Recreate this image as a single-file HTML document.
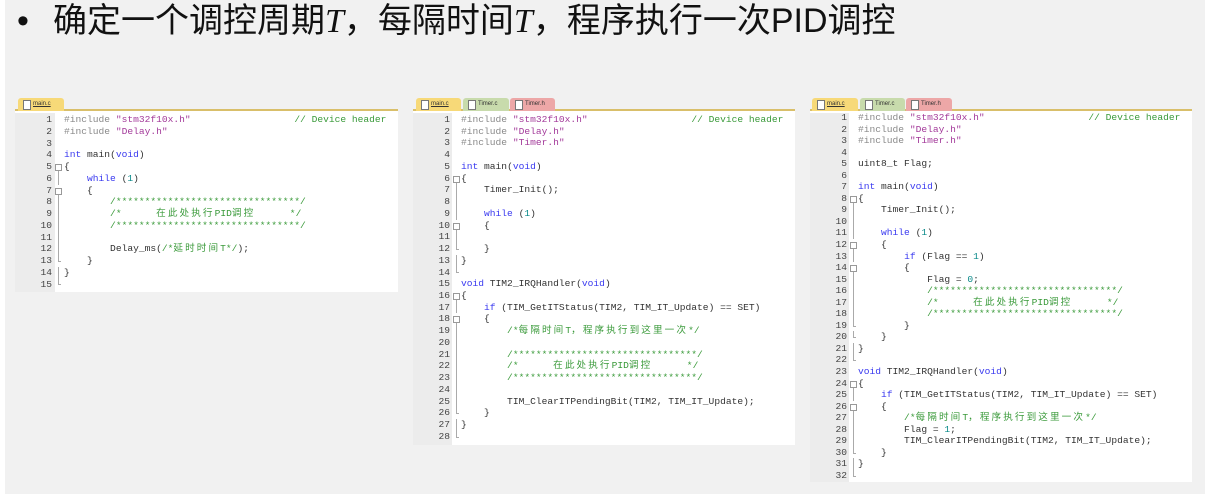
<!DOCTYPE html>
<html><head><meta charset="utf-8"><style>
*{margin:0;padding:0;box-sizing:border-box}
html,body{width:1205px;height:494px;overflow:hidden}
body{background:#f1f1f1;position:relative;font-family:"Liberation Sans","Noto Sans CJK SC",sans-serif}
.lw{position:absolute;left:0;top:0;width:5px;height:494px;background:#fff}
.title{position:absolute;left:17px;top:1px;font-size:34px;color:#111;white-space:nowrap;line-height:40px}
.title .bul{display:inline-block;width:36px}
.title i{font-family:"Liberation Serif",serif}
.pn{position:absolute;background:#fff;overflow:hidden}
.tabs{height:14px;background:#f1f1f1;border-bottom:2px solid #d9bf6a;position:relative}
.tab{position:absolute;top:1px;height:13px;font-size:6px;line-height:13px;padding-left:15px;color:#333;border-radius:3px 3px 0 0}
.tab:before{content:"";position:absolute;left:5px;top:2px;width:6px;height:8px;border:1px solid #777;background:#fff}
.y{background:#f7d978}.y span{text-decoration:underline}
.g{background:#c8dbac}.r{background:#eda7a7}
.gut{position:absolute;left:0;bottom:0;background:#ececec}
.code{position:absolute;left:0;font-family:"Liberation Mono","Noto Sans CJK SC",monospace;font-size:9.6px;color:#333}
.ln{display:flex;height:var(--lh);line-height:var(--lh);white-space:pre}
.nm{width:var(--nw);text-align:right;color:#444}
.fd{width:var(--fw);position:relative}
.fd.v:after,.fd.b:after,.fd.e:after{content:"";position:absolute;left:6px;top:0;bottom:0;border-left:1px solid #aaa}
.fd.b:before{content:"";position:absolute;left:3px;top:3px;width:5px;height:5px;border:1px solid #999;background:#fff;z-index:1}
.fd.b:after{top:8px}
.fd.e:after{bottom:50%}
.fd.e span{position:absolute;left:6px;top:50%;width:3px;border-top:1px solid #aaa}
.p{color:#8a8a8a}.s{color:#a33a9a}.c{color:#3a9a3a}.k{color:#3a3af0}.n{color:#0a8a8a}
.z{letter-spacing:2.1px}
</style></head><body>
<div class="lw"></div>
<div class="title"><span class="bul">•</span>确定一个调控周期<i>T</i>，每隔时间<i>T</i>，程序执行一次PID调控</div>

<!-- Panel 1 -->
<div class="pn" style="left:15px;top:97px;width:383px;height:195px">
<div class="tabs"><div class="tab y" style="left:3px;width:46px"><span>main.c</span></div></div>
<div class="gut" style="top:16px;width:40px"></div>
<div class="code" style="top:17px;--lh:11.75px;--nw:37px;--fw:12px">
<div class="ln"><span class="nm">1</span><span class="fd"></span><span><span class="p">#include </span><span class="s">"stm32f10x.h"</span>                  <span class="c">// Device header</span></span></div>
<div class="ln"><span class="nm">2</span><span class="fd"></span><span><span class="p">#include </span><span class="s">"Delay.h"</span></span></div>
<div class="ln"><span class="nm">3</span><span class="fd"></span><span></span></div>
<div class="ln"><span class="nm">4</span><span class="fd"></span><span><span class="k">int</span> main(<span class="k">void</span>)</span></div>
<div class="ln"><span class="nm">5</span><span class="fd b"></span><span>{</span></div>
<div class="ln"><span class="nm">6</span><span class="fd v"></span><span>    <span class="k">while</span> (<span class="n">1</span>)</span></div>
<div class="ln"><span class="nm">7</span><span class="fd b"></span><span>    {</span></div>
<div class="ln"><span class="nm">8</span><span class="fd v"></span><span class="c">        /********************************/</span></div>
<div class="ln"><span class="nm">9</span><span class="fd v"></span><span class="c">        /*      <span class="z">在此处执行</span>PID<span class="z">调控</span>      */</span></div>
<div class="ln"><span class="nm">10</span><span class="fd v"></span><span class="c">        /********************************/</span></div>
<div class="ln"><span class="nm">11</span><span class="fd v"></span><span></span></div>
<div class="ln"><span class="nm">12</span><span class="fd v"></span><span>        Delay_ms(<span class="c">/*<span class="z">延时时间</span>T*/</span>);</span></div>
<div class="ln"><span class="nm">13</span><span class="fd e"><span></span></span><span>    }</span></div>
<div class="ln"><span class="nm">14</span><span class="fd v"></span><span>}</span></div>
<div class="ln"><span class="nm">15</span><span class="fd e"><span></span></span><span></span></div>
</div>
</div>

<!-- Panel 2 -->
<div class="pn" style="left:413px;top:97px;width:382px;height:348px">
<div class="tabs"><div class="tab y" style="left:3px;width:45px"><span>main.c</span></div><div class="tab g" style="left:50px;width:46px">Timer.c</div><div class="tab r" style="left:97px;width:45px">Timer.h</div></div>
<div class="gut" style="top:16px;width:39px"></div>
<div class="code" style="top:17px;--lh:11.74px;--nw:37px;--fw:11px">
<div class="ln"><span class="nm">1</span><span class="fd"></span><span><span class="p">#include </span><span class="s">"stm32f10x.h"</span>                  <span class="c">// Device header</span></span></div>
<div class="ln"><span class="nm">2</span><span class="fd"></span><span><span class="p">#include </span><span class="s">"Delay.h"</span></span></div>
<div class="ln"><span class="nm">3</span><span class="fd"></span><span><span class="p">#include </span><span class="s">"Timer.h"</span></span></div>
<div class="ln"><span class="nm">4</span><span class="fd"></span><span></span></div>
<div class="ln"><span class="nm">5</span><span class="fd"></span><span><span class="k">int</span> main(<span class="k">void</span>)</span></div>
<div class="ln"><span class="nm">6</span><span class="fd b"></span><span>{</span></div>
<div class="ln"><span class="nm">7</span><span class="fd v"></span><span>    Timer_Init();</span></div>
<div class="ln"><span class="nm">8</span><span class="fd v"></span><span></span></div>
<div class="ln"><span class="nm">9</span><span class="fd v"></span><span>    <span class="k">while</span> (<span class="n">1</span>)</span></div>
<div class="ln"><span class="nm">10</span><span class="fd b"></span><span>    {</span></div>
<div class="ln"><span class="nm">11</span><span class="fd v"></span><span></span></div>
<div class="ln"><span class="nm">12</span><span class="fd e"><span></span></span><span>    }</span></div>
<div class="ln"><span class="nm">13</span><span class="fd v"></span><span>}</span></div>
<div class="ln"><span class="nm">14</span><span class="fd e"><span></span></span><span></span></div>
<div class="ln"><span class="nm">15</span><span class="fd"></span><span><span class="k">void</span> TIM2_IRQHandler(<span class="k">void</span>)</span></div>
<div class="ln"><span class="nm">16</span><span class="fd b"></span><span>{</span></div>
<div class="ln"><span class="nm">17</span><span class="fd v"></span><span>    <span class="k">if</span> (TIM_GetITStatus(TIM2, TIM_IT_Update) == SET)</span></div>
<div class="ln"><span class="nm">18</span><span class="fd b"></span><span>    {</span></div>
<div class="ln"><span class="nm">19</span><span class="fd v"></span><span class="c">        /*<span class="z">每隔时间</span>T<span class="z">，程序执行到这里一次</span>*/</span></div>
<div class="ln"><span class="nm">20</span><span class="fd v"></span><span></span></div>
<div class="ln"><span class="nm">21</span><span class="fd v"></span><span class="c">        /********************************/</span></div>
<div class="ln"><span class="nm">22</span><span class="fd v"></span><span class="c">        /*      <span class="z">在此处执行</span>PID<span class="z">调控</span>      */</span></div>
<div class="ln"><span class="nm">23</span><span class="fd v"></span><span class="c">        /********************************/</span></div>
<div class="ln"><span class="nm">24</span><span class="fd v"></span><span></span></div>
<div class="ln"><span class="nm">25</span><span class="fd v"></span><span>        TIM_ClearITPendingBit(TIM2, TIM_IT_Update);</span></div>
<div class="ln"><span class="nm">26</span><span class="fd e"><span></span></span><span>    }</span></div>
<div class="ln"><span class="nm">27</span><span class="fd v"></span><span>}</span></div>
<div class="ln"><span class="nm">28</span><span class="fd e"><span></span></span><span></span></div>
</div>
</div>

<!-- Panel 3 -->
<div class="pn" style="left:810px;top:97px;width:382px;height:385px">
<div class="tabs"><div class="tab y" style="left:2px;width:46px"><span>main.c</span></div><div class="tab g" style="left:50px;width:45px">Timer.c</div><div class="tab r" style="left:96px;width:46px">Timer.h</div></div>
<div class="gut" style="top:16px;width:39px"></div>
<div class="code" style="top:15px;--lh:11.55px;--nw:37px;--fw:11px">
<div class="ln"><span class="nm">1</span><span class="fd"></span><span><span class="p">#include </span><span class="s">"stm32f10x.h"</span>                  <span class="c">// Device header</span></span></div>
<div class="ln"><span class="nm">2</span><span class="fd"></span><span><span class="p">#include </span><span class="s">"Delay.h"</span></span></div>
<div class="ln"><span class="nm">3</span><span class="fd"></span><span><span class="p">#include </span><span class="s">"Timer.h"</span></span></div>
<div class="ln"><span class="nm">4</span><span class="fd"></span><span></span></div>
<div class="ln"><span class="nm">5</span><span class="fd"></span><span>uint8_t Flag;</span></div>
<div class="ln"><span class="nm">6</span><span class="fd"></span><span></span></div>
<div class="ln"><span class="nm">7</span><span class="fd"></span><span><span class="k">int</span> main(<span class="k">void</span>)</span></div>
<div class="ln"><span class="nm">8</span><span class="fd b"></span><span>{</span></div>
<div class="ln"><span class="nm">9</span><span class="fd v"></span><span>    Timer_Init();</span></div>
<div class="ln"><span class="nm">10</span><span class="fd v"></span><span></span></div>
<div class="ln"><span class="nm">11</span><span class="fd v"></span><span>    <span class="k">while</span> (<span class="n">1</span>)</span></div>
<div class="ln"><span class="nm">12</span><span class="fd b"></span><span>    {</span></div>
<div class="ln"><span class="nm">13</span><span class="fd v"></span><span>        <span class="k">if</span> (Flag == <span class="n">1</span>)</span></div>
<div class="ln"><span class="nm">14</span><span class="fd b"></span><span>        {</span></div>
<div class="ln"><span class="nm">15</span><span class="fd v"></span><span>            Flag = <span class="n">0</span>;</span></div>
<div class="ln"><span class="nm">16</span><span class="fd v"></span><span class="c">            /********************************/</span></div>
<div class="ln"><span class="nm">17</span><span class="fd v"></span><span class="c">            /*      <span class="z">在此处执行</span>PID<span class="z">调控</span>      */</span></div>
<div class="ln"><span class="nm">18</span><span class="fd v"></span><span class="c">            /********************************/</span></div>
<div class="ln"><span class="nm">19</span><span class="fd e"><span></span></span><span>        }</span></div>
<div class="ln"><span class="nm">20</span><span class="fd e"><span></span></span><span>    }</span></div>
<div class="ln"><span class="nm">21</span><span class="fd v"></span><span>}</span></div>
<div class="ln"><span class="nm">22</span><span class="fd e"><span></span></span><span></span></div>
<div class="ln"><span class="nm">23</span><span class="fd"></span><span><span class="k">void</span> TIM2_IRQHandler(<span class="k">void</span>)</span></div>
<div class="ln"><span class="nm">24</span><span class="fd b"></span><span>{</span></div>
<div class="ln"><span class="nm">25</span><span class="fd v"></span><span>    <span class="k">if</span> (TIM_GetITStatus(TIM2, TIM_IT_Update) == SET)</span></div>
<div class="ln"><span class="nm">26</span><span class="fd b"></span><span>    {</span></div>
<div class="ln"><span class="nm">27</span><span class="fd v"></span><span class="c">        /*<span class="z">每隔时间</span>T<span class="z">，程序执行到这里一次</span>*/</span></div>
<div class="ln"><span class="nm">28</span><span class="fd v"></span><span>        Flag = <span class="n">1</span>;</span></div>
<div class="ln"><span class="nm">29</span><span class="fd v"></span><span>        TIM_ClearITPendingBit(TIM2, TIM_IT_Update);</span></div>
<div class="ln"><span class="nm">30</span><span class="fd e"><span></span></span><span>    }</span></div>
<div class="ln"><span class="nm">31</span><span class="fd v"></span><span>}</span></div>
<div class="ln"><span class="nm">32</span><span class="fd e"><span></span></span><span></span></div>
</div>
</div>
</body></html>
